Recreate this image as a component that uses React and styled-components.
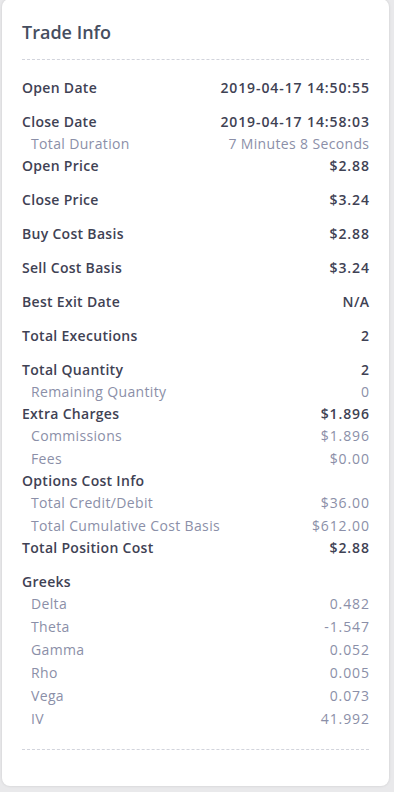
import React from "react";
import styled, { createGlobalStyle } from "styled-components";

const GlobalStyle = createGlobalStyle`
  html, body {
    margin: 0;
    padding: 0;
    background: #e9e9eb;
    font-family: "Open Sans", "Noto Sans", sans-serif;
  }
`;

const groups = [
  { label: "Open Date", value: "2019-04-17 14:50:55" },
  {
    label: "Close Date",
    value: "2019-04-17 14:58:03",
    subs: [{ label: "Total Duration", value: "7 Minutes 8 Seconds" }],
  },
  { label: "Open Price", value: "$2.88" },
  { label: "Close Price", value: "$3.24" },
  { label: "Buy Cost Basis", value: "$2.88" },
  { label: "Sell Cost Basis", value: "$3.24" },
  { label: "Best Exit Date", value: "N/A" },
  { label: "Total Executions", value: "2" },
  {
    label: "Total Quantity",
    value: "2",
    subs: [{ label: "Remaining Quantity", value: "0" }],
  },
  {
    label: "Extra Charges",
    value: "$1.896",
    subs: [
      { label: "Commissions", value: "$1.896" },
      { label: "Fees", value: "$0.00" },
    ],
  },
  {
    label: "Options Cost Info",
    value: "",
    subs: [
      { label: "Total Credit/Debit", value: "$36.00" },
      { label: "Total Cumulative Cost Basis", value: "$612.00" },
    ],
  },
  { label: "Total Position Cost", value: "$2.88" },
  {
    label: "Greeks",
    value: "",
    subs: [
      { label: "Delta", value: "0.482" },
      { label: "Theta", value: "-1.547" },
      { label: "Gamma", value: "0.052" },
      { label: "Rho", value: "0.005" },
      { label: "Vega", value: "0.073" },
      { label: "IV", value: "41.992" },
    ],
  },
];

// digits in the original font run wider than letters
const isNumeric = (v) => /^[-$0-9.:\s]+$/.test(v);

function App() {
  return (
    <Page>
      <GlobalStyle />
      <Card>
        <Title>Trade Info</Title>
        <Divider top="15px" />
        <List>
          {groups.map((g) => (
            <Group key={g.label} alone={!g.subs}>
              <Row>
                <Label>{g.label}</Label>
                <Value numeric={isNumeric(g.value)}>{g.value}</Value>
              </Row>
              {g.subs &&
                g.subs.map((s) => (
                  <SubRow key={s.label}>
                    <SubLabel>{s.label}</SubLabel>
                    <SubValue numeric={isNumeric(s.value)}>{s.value}</SubValue>
                  </SubRow>
                ))}
            </Group>
          ))}
        </List>
        <Divider top="0" />
      </Card>
    </Page>
  );
}

const Page = styled.div({
  padding: "0 5px 5px 2px",
  minHeight: "792px",
  boxSizing: "border-box",
});
const Card = styled.div({
  background: "#ffffff",
  borderRadius: "8px",
  boxShadow: "0 0 3px rgba(0,0,0,0.12)",
  padding: "21px 20px 0 20px",
  height: "787px",
  boxSizing: "border-box",
  marginTop: "-1px",
});
const Title = styled.h3({
  margin: "0",
  fontSize: "18px",
  fontWeight: 600,
  color: "#464e5f",
  lineHeight: "24px",
});
const Divider = styled.div`
  border-top: 1px dashed #d2d4dc;
  margin-top: ${(p) => p.top};
`;
const List = styled.div({
  padding: "17px 0 19px 0",
});
const Group = styled.div`
  margin-bottom: ${(p) => (p.alone ? "13px" : "0")};
`;
const Row = styled.div({
  display: "flex",
  justifyContent: "space-between",
  alignItems: "center",
  height: "21px",
});
const Label = styled.span({
  fontSize: "14px",
  fontWeight: 600,
  color: "#3f4254",
  letterSpacing: "0.3px",
});
const Value = styled.span`
  font-size: 14px;
  font-weight: 600;
  color: #3f4254;
  letter-spacing: ${(p) => (p.numeric ? "0.9px" : "0.35px")};
  margin-right: ${(p) => (p.numeric ? "-0.9px" : "-0.35px")};
`;
const SubRow = styled.div({
  display: "flex",
  justifyContent: "space-between",
  alignItems: "center",
  height: "23px",
  paddingLeft: "9px",
});
const SubLabel = styled.span({
  fontSize: "14px",
  fontWeight: 400,
  color: "#8b8fa8",
  letterSpacing: "0.35px",
});
const SubValue = styled.span`
  font-size: 14px;
  font-weight: 400;
  color: #8b8fa8;
  letter-spacing: ${(p) => (p.numeric ? "0.9px" : "0.35px")};
  margin-right: ${(p) => (p.numeric ? "-0.9px" : "-0.35px")};
`;

export default App;
